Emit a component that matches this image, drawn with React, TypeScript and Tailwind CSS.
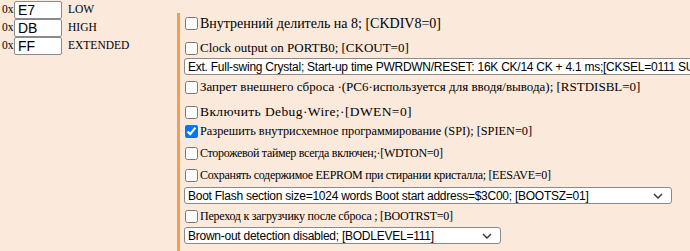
import React from "react";

const serif = { fontFamily: '"Liberation Serif", "Times New Roman", serif' };
const sans = { fontFamily: '"Liberation Sans", Arial, sans-serif' };

// fuse bytes on the left
const fuses = [
  { value: "E7", label: "LOW" },
  { value: "DB", label: "HIGH" },
  { value: "FF", label: "EXTENDED" },
];

type Row =
  | { kind: "check"; text: string; size: string; checked?: boolean; mt: string }
  | { kind: "select"; text: string; width: string; mt: string };

const rows: Row[] = [
  { kind: "check", text: "Внутренний делитель на 8; [CKDIV8=0]", size: "text-[14px]", mt: "mt-px" },
  { kind: "check", text: "Clock output on PORTB0; [CKOUT=0]", size: "text-[13px]", mt: "mt-[7px]" },
  {
    kind: "select",
    text: "Ext. Full-swing Crystal; Start-up time PWRDWN/RESET: 16K CK/14 CK + 4.1 ms;[CKSEL=0111 SUT=11]",
    width: "w-[560px]",
    mt: "mt-px",
  },
  {
    kind: "check",
    text: "Запрет внешнего сброса ·(PC6·используется для вводя/вывода); [RSTDISBL=0]",
    size: "text-[13px]",
    mt: "mt-[3px]",
  },
  {
    kind: "check",
    text: "Включить Debug·Wire;·[DWEN=0]",
    size: "text-[13.5px] tracking-[0.4px]",
    mt: "mt-[7px]",
  },
  {
    kind: "check",
    text: "Разрешить внутрисхемное программирование (SPI); [SPIEN=0]",
    size: "text-[12.3px]",
    checked: true,
    mt: "mt-px",
  },
  {
    kind: "check",
    text: "Сторожевой таймер всегда включен;·[WDTON=0]",
    size: "text-[12px] tracking-[-0.3px]",
    mt: "mt-[4px]",
  },
  {
    kind: "check",
    text: "Сохранять содержимое EEPROM при стирании кристалла; [EESAVE=0]",
    size: "text-[12px] tracking-[-0.3px]",
    mt: "mt-[4px]",
  },
  {
    kind: "select",
    text: "Boot Flash section size=1024 words Boot start address=$3C00; [BOOTSZ=01]",
    width: "w-[488px]",
    mt: "mt-[3px]",
  },
  {
    kind: "check",
    text: "Переход к загрузчику после сброса ; [BOOTRST=0]",
    size: "text-[12px] tracking-[-0.25px]",
    mt: "mt-[3px]",
  },
  {
    kind: "select",
    text: "Brown-out detection disabled; [BODLEVEL=111]",
    width: "w-[317px]",
    mt: "mt-[2px]",
  },
];

const Chevron = () => (
  <svg width="10" height="6" viewBox="0 0 10 6" className="shrink-0">
    <path d="M1 1l4 4 4-4" fill="none" stroke="#333" strokeWidth="1.4" />
  </svg>
);

const FakeSelect = ({ text, width }: { text: string; width: string }) => (
  <div
    className={`flex h-[17px] ${width} shrink-0 items-center justify-between overflow-hidden rounded-[3px] border border-[#8a8a8a] bg-white pl-[3px] pr-[8px] text-[12px] leading-none tracking-[-0.25px] whitespace-nowrap text-black`}
    style={sans}
  >
    <span>{text}</span>
    <Chevron />
  </div>
);

export default function App() {
  return (
    <div className="flex h-[251px] w-[690px] overflow-hidden bg-[#fbe9dc] text-[13px] text-black">
      {/* left: fuse bytes */}
      <div className="flex w-[177px] shrink-0 flex-col pt-px pl-[2px]">
        {fuses.map((f) => (
          <div key={f.label} className="flex h-[18px] items-center">
            <span style={serif} className="w-[12px] text-[11.5px]">
              0x
            </span>
            <div
              className="flex h-[18px] w-[48px] items-center rounded-[2px] border border-[#8a8a8a] bg-white pl-[3px] text-[14px]"
              style={sans}
            >
              {f.value}
            </div>
            <span style={serif} className="ml-[6px] text-[11.5px]">
              {f.label}
            </span>
          </div>
        ))}
      </div>

      {/* right: fuse bits */}
      <div className="mt-[13px] flex min-w-0 flex-1 flex-col border-l-[3px] border-[#f29e4c] pl-[4px]">
        {rows.map((r, i) =>
          r.kind === "check" ? (
            <label
              key={i}
              className={`flex h-[18px] items-center whitespace-nowrap ${r.size} ${r.mt}`}
              style={serif}
            >
              <input
                type="checkbox"
                defaultChecked={r.checked}
                className="mr-[2px] ml-[1px] h-[13px] w-[13px] shrink-0"
              />
              <span>{r.text}</span>
            </label>
          ) : (
            <div key={i} className={r.mt}>
              <FakeSelect text={r.text} width={r.width} />
            </div>
          )
        )}
      </div>
    </div>
  );
}
